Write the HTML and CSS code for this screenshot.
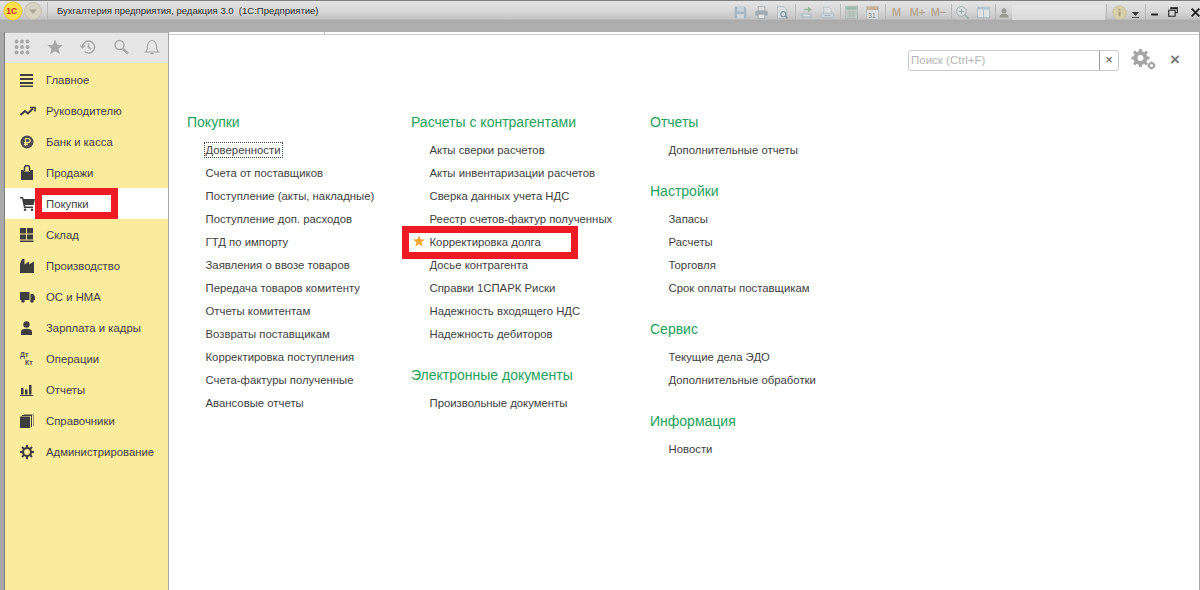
FILE: index.html
```html
<!DOCTYPE html>
<html lang="ru">
<head>
<meta charset="utf-8">
<title>Бухгалтерия предприятия</title>
<link rel="stylesheet" href="styles.css">
</head>
<body>
<div class="window">
  <header class="titlebar">
    <svg class="logo" width="20" height="20" viewBox="0 0 21 21"><circle cx="10.500" cy="10.500" r="9.500" fill="#f8e04a" stroke="#e9c23a"/><text x="3.500" y="14" class="logo-text">1С</text></svg>
    <svg class="menu-btn" width="20" height="20" viewBox="0 0 20 20"><circle cx="10" cy="10" r="8.500" fill="#d6d2c4" stroke="#c4c0b2"/><path d="M6 8.500h8L10 13z" fill="#a9a594"/></svg>
    <span class="sep sep-tall"></span>
    <span class="app-title">Бухгалтерия предприятия, редакция 3.0&nbsp; (1С:Предприятие)</span>
    <div class="tools">
      <span class="slot"><svg viewBox="0 0 18 18"><path d="M2 2h12l2 2v12H2z" fill="#9db4c6"/><rect x="5" y="2" width="8" height="6" fill="#c4d3de"/><rect x="5" y="11" width="8" height="5" fill="#d4dde3"/></svg></span>
      <span class="slot"><svg viewBox="0 0 18 18"><rect x="5" y="2" width="8" height="5" fill="#e2e2e2" stroke="#9aa3aa"/><rect x="1.500" y="7" width="15" height="6" rx="1" fill="#9aa5ad"/><rect x="5" y="11" width="8" height="5" fill="#e8e8e8" stroke="#9aa3aa"/></svg></span>
      <span class="slot"><svg viewBox="0 0 18 18"><path d="M3 2h8l3 3v11H3z" fill="#dbe2e6" stroke="#a5b4be"/><circle cx="10" cy="11" r="3" fill="none" stroke="#7a8e9c" stroke-width="1.500"/><path d="M12 13l3 3" stroke="#7a8e9c" stroke-width="2"/></svg></span>
      <span class="sep"></span>
      <span class="slot"><svg viewBox="0 0 20 18"><path d="M7 4h5V1l5 4-5 4V6H7z" fill="#8fb392"/><rect x="2" y="10" width="16" height="6" rx="2" fill="#b6c3cc"/><path d="M6 13h8" stroke="#eef1f3" stroke-width="1.500"/></svg></span>
      <span class="slot"><svg viewBox="0 0 20 18"><path d="M5 9V2h7l3 3v4" fill="#dde3e7" stroke="#a9b7c0"/><rect x="2" y="10" width="16" height="6" rx="2" fill="#ccd6dc" stroke="#a9b7c0"/><path d="M6 13h8" stroke="#8fa0ac"/></svg></span>
      <span class="sep"></span>
      <span class="slot"><svg viewBox="0 0 18 18"><rect x="2" y="1.500" width="14" height="15" fill="#c3cdc9" stroke="#9db0a8"/><rect x="3" y="2.500" width="12" height="3" fill="#8fb0a0"/><path d="M4 8h10M4 10.500h10M4 13h10M7 7v8M11 7v8" stroke="#a3b5ae"/></svg></span>
      <span class="slot"><svg viewBox="0 0 18 18"><rect x="2" y="2" width="14" height="15" fill="#dfe3e3" stroke="#b4b9b8"/><rect x="2" y="2" width="14" height="4" fill="#c5a88e"/><text x="4" y="15" class="cal-text">31</text></svg></span>
      <span class="sep"></span>
      <span class="slot mem">M</span>
      <span class="slot mem">M+</span>
      <span class="slot mem">M−</span>
      <span class="sep"></span>
      <span class="slot"><svg viewBox="0 0 20 20"><circle cx="8.500" cy="8.500" r="6.500" fill="#d8dcdc" stroke="#98a4a4" stroke-width="1.200"/><path d="M8.500 5.500v6M5.500 8.500h6" stroke="#8aa09a" stroke-width="1.200"/><path d="M13 13l5 5" stroke="#98a4a4" stroke-width="2"/></svg></span>
      <span class="slot"><svg viewBox="0 0 20 18"><rect x="2" y="2" width="16" height="14" fill="#e4e6e6" stroke="#9ab1c0"/><rect x="2" y="2" width="16" height="3" fill="#aebfca"/><path d="M10 5v11" stroke="#9ab1c0"/></svg></span>
      <span class="sep sep-tight"></span>
      <svg class="tool-user" width="10" height="11" viewBox="0 0 16 16"><circle cx="8" cy="5" r="4" fill="#9a9a94"/><path d="M1 16c0-5 3-6 7-6s7 1 7 6z" fill="#9a9a94"/></svg>
      <span class="user-field"></span>
      <span class="sep sep-tight"></span>
      <svg class="info" width="15" height="15" viewBox="0 0 20 20"><circle cx="10" cy="10" r="9" fill="#d7cfa9" stroke="#c7bf9a"/><rect x="8.800" y="9" width="2.400" height="6" fill="#a49c78"/><rect x="8.800" y="5" width="2.400" height="2.400" fill="#a49c78"/></svg>
      <svg class="caret" width="7" height="6" viewBox="0 0 7 6"><path d="M0 0h7L3.500 4z" fill="#333"/><path d="M0 5.500h7" stroke="#555"/></svg>
      <span class="sep sep-caret"></span>
      <svg class="win-btn win-min" width="7" height="3" viewBox="0 0 7 3"><path d="M0 1.500h7" stroke="#222" stroke-width="2"/></svg>
      <svg class="win-btn win-max" width="10" height="10" viewBox="0 0 14 14"><path d="M4 3V1h9v7h-3M1 4.500h9v8.500H1z" fill="none" stroke="#222" stroke-width="1.500"/><path d="M4 2h9" stroke="#222" stroke-width="2"/></svg>
      <svg class="win-btn win-close" width="9" height="9" viewBox="0 0 14 14"><path d="M1 1l12 12M13 1L1 13" stroke="#222" stroke-width="3"/></svg>
    </div>
  </header>

  <div class="body-row">
    <div class="frame"></div>
    <aside class="sidebar">
      <div class="quick">
        <svg width="16" height="16" viewBox="0 0 16 16" fill="#a8a8a8"><circle cx="2.500" cy="2.500" r="2"/><circle cx="8" cy="2.500" r="2"/><circle cx="13.500" cy="2.500" r="2"/><circle cx="2.500" cy="8" r="2"/><circle cx="8" cy="8" r="2"/><circle cx="13.500" cy="8" r="2"/><circle cx="2.500" cy="13.500" r="2"/><circle cx="8" cy="13.500" r="2"/><circle cx="13.500" cy="13.500" r="2"/></svg>
        <svg width="16" height="16" viewBox="0 0 16 16" fill="#a8a8a8"><path d="M8 .5l2.200 5.200 5.600.4-4.300 3.600 1.400 5.500L8 12.300l-4.900 2.900 1.400-5.500L.2 6.100l5.600-.4z"/></svg>
        <svg width="16" height="16" viewBox="0 0 16 16" fill="none" stroke="#a8a8a8" stroke-width="1.500"><path d="M2.500 8a6 6 0 1 1 2 4.500"/><path d="M8.500 4.500V8.500l2.500 1.500"/><path d="M0 6.500l2.500 2.500 2.500-2.500" stroke-width="1.200"/></svg>
        <svg width="16" height="16" viewBox="0 0 16 16" fill="none" stroke="#a8a8a8"><circle cx="6.500" cy="6" r="4.500" stroke-width="1.500"/><path d="M10 10l5 4.500" stroke-width="2.400"/></svg>
        <svg class="bell" width="16" height="16" viewBox="0 0 16 16" fill="none" stroke="#a8a8a8" stroke-width="1.200"><path d="M1.500 13c2-1.500 2-3 2-6 0-3 2-5.500 4.500-5.500s4.500 2.500 4.500 5.500c0 3 0 4.500 2 6z"/><path d="M6.500 14.500h3" stroke-width="1.600"/></svg>
      </div>
      <nav class="nav">
        <a class="nav-item"><span class="nav-icon"><svg width="14" height="14" viewBox="0 0 14 14" fill="#3d3d3d"><rect y="1" width="13" height="2"/><rect y="5" width="13" height="2"/><rect y="9" width="13" height="2"/><rect y="12.500" width="13" height="1.500"/></svg></span>Главное</a>
        <a class="nav-item"><span class="nav-icon"><svg width="16" height="14" viewBox="0 0 16 14" fill="none" stroke="#3d3d3d" stroke-width="2"><path d="M0.500 11l4.500-4 3 2.500 5-5"/><path d="M10 3.500h5v4" stroke-width="1.600"/></svg></span>Руководителю</a>
        <a class="nav-item"><span class="nav-icon"><svg width="14" height="14" viewBox="0 0 14 14"><circle cx="7" cy="7" r="6.500" fill="#4d4d4d"/><path d="M5.500 11V3.500h2.500a2 2 0 0 1 0 4.200H4M4 9.300h4" fill="none" stroke="#fbeb9d" stroke-width="1.200"/></svg></span>Банк и касса</a>
        <a class="nav-item"><span class="nav-icon"><svg width="14" height="15" viewBox="0 0 14 15"><path d="M1 5h2.500l.5 1.500h6L10.500 5H13v10H1z" fill="#3d3d3d"/><path d="M4.500 6V3a2.500 2.500 0 0 1 5 0v3" fill="none" stroke="#3d3d3d" stroke-width="1.500"/></svg></span>Продажи</a>
        <a class="nav-item nav-active"><span class="nav-icon"><svg width="15" height="14" viewBox="0 0 15 14" fill="#3d3d3d"><path d="M0 0h3l.6 2H15l-1.500 6H5l.3 1.500H13V11H4L2 1.500H0z"/><circle cx="5" cy="12.700" r="1.300"/><circle cx="12" cy="12.700" r="1.300"/></svg></span>Покупки</a>
        <a class="nav-item"><span class="nav-icon"><svg width="14" height="14" viewBox="0 0 14 14" fill="#3d3d3d"><rect width="6" height="5.500"/><rect x="7" width="6" height="5.500"/><rect y="6.500" width="6" height="5"/><rect x="7" y="6.500" width="6" height="5"/><rect y="12.500" width="13.500" height="1.500"/></svg></span>Склад</a>
        <a class="nav-item"><span class="nav-icon"><svg width="14" height="14" viewBox="0 0 14 14" fill="#3d3d3d"><path d="M0 14V5l2-5h2.500v5.500L9 2.500v3l5-3V14z"/></svg></span>Производство</a>
        <a class="nav-item"><span class="nav-icon"><svg width="15" height="12" viewBox="0 0 15 12" fill="#3d3d3d"><rect y="1" width="9.500" height="8"/><path d="M10.500 3H13l2 2.500V9h-4.500z"/><circle cx="3" cy="10" r="1.800"/><circle cx="12" cy="10" r="1.800"/></svg></span>ОС и НМА</a>
        <a class="nav-item"><span class="nav-icon"><svg width="13" height="14" viewBox="0 0 13 14" fill="#3d3d3d"><circle cx="6.500" cy="3.500" r="3.200"/><path d="M1 14v-3c0-2 2-3.200 5.500-3.200S12 9 12 11v3z"/></svg></span>Зарплата и кадры</a>
        <a class="nav-item"><span class="nav-icon dt"><span class="dt-d">Дт</span><span class="dt-k">Кт</span></span>Операции</a>
        <a class="nav-item"><span class="nav-icon"><svg width="13" height="12" viewBox="0 0 13 12" fill="#3d3d3d"><rect x="1" y="4" width="2.500" height="6.500"/><rect x="5" y="5.500" width="2.500" height="5"/><rect x="9" y="1" width="2.500" height="9.500"/><rect y="11" width="13" height="1"/></svg></span>Отчеты</a>
        <a class="nav-item"><span class="nav-icon"><svg width="14" height="14" viewBox="0 0 14 14" fill="#3d3d3d"><rect y="2.500" width="10" height="11.500"/><path d="M11 2H2V1h10v12h-1zM13 0H4v.5h9.500V12H13z"/></svg></span>Справочники</a>
        <a class="nav-item"><span class="nav-icon"><svg width="14" height="14" viewBox="0 0 14 14"><circle cx="7" cy="7" r="4" fill="none" stroke="#3d3d3d" stroke-width="2.200"/><path d="M7 0v3M7 11v3M0 7h3M11 7h3M2 2l2 2M10 10l2 2M12 2l-2 2M4 10l-2 2" stroke="#3d3d3d" stroke-width="2"/></svg></span>Администрирование</a>
      </nav>
    </aside>
    <main class="main">
      <div class="tabstrip"><span class="tab-line"></span></div>
      <div class="search-row">
        <div class="search">
          <span class="search-input">Поиск (Ctrl+F)</span>
          <span class="search-clear">×</span>
        </div>
        <svg class="gears" width="26" height="22" viewBox="0 0 26 22"><g fill="none" stroke="#a6a6a6"><circle cx="9.500" cy="9" r="5" stroke-width="4"/><path d="M9.500 0v4M9.500 14v4M.500 9h4M14.500 9h4M3 2.500l3 3M13 12.500l3 3M16 2.500l-3 3M6 12.500l-3 3" stroke-width="3"/><circle cx="20.500" cy="16.500" r="2.500" stroke-width="2"/><path d="M20.500 12.500v2M20.500 18.500v2M16.500 16.500h2M22.500 16.500h2" stroke-width="1.800"/></g></svg>
        <span class="close">×</span>
      </div>
      <div class="columns">
        <div class="col col-1">
          <section class="group">
            <h2 class="group-title">Покупки</h2>
            <a class="link link-focus"><span>Доверенности</span></a>
            <a class="link">Счета от поставщиков</a>
            <a class="link">Поступление (акты, накладные)</a>
            <a class="link">Поступление доп. расходов</a>
            <a class="link">ГТД по импорту</a>
            <a class="link">Заявления о ввозе товаров</a>
            <a class="link">Передача товаров комитенту</a>
            <a class="link">Отчеты комитентам</a>
            <a class="link">Возвраты поставщикам</a>
            <a class="link">Корректировка поступления</a>
            <a class="link">Счета-фактуры полученные</a>
            <a class="link">Авансовые отчеты</a>
          </section>
        </div>
        <div class="col col-2">
          <section class="group">
            <h2 class="group-title">Расчеты с контрагентами</h2>
            <a class="link">Акты сверки расчетов</a>
            <a class="link">Акты инвентаризации расчетов</a>
            <a class="link">Сверка данных учета НДС</a>
            <a class="link">Реестр счетов-фактур полученных</a>
            <a class="link link-star"><svg class="star" width="12" height="12" viewBox="0 0 16 16" fill="#f5a732"><path d="M8 .5l2.200 5.200 5.600.4-4.300 3.600 1.400 5.500L8 12.300l-4.900 2.900 1.400-5.500L.2 6.100l5.600-.4z"/></svg>Корректировка долга</a>
            <a class="link">Досье контрагента</a>
            <a class="link">Справки 1СПАРК Риски</a>
            <a class="link">Надежность входящего НДС</a>
            <a class="link">Надежность дебиторов</a>
          </section>
          <section class="group">
            <h2 class="group-title">Электронные документы</h2>
            <a class="link">Произвольные документы</a>
          </section>
        </div>
        <div class="col">
          <section class="group">
            <h2 class="group-title">Отчеты</h2>
            <a class="link">Дополнительные отчеты</a>
          </section>
          <section class="group">
            <h2 class="group-title">Настройки</h2>
            <a class="link">Запасы</a>
            <a class="link">Расчеты</a>
            <a class="link">Торговля</a>
            <a class="link">Срок оплаты поставщикам</a>
          </section>
          <section class="group">
            <h2 class="group-title">Сервис</h2>
            <a class="link">Текущие дела ЭДО</a>
            <a class="link">Дополнительные обработки</a>
          </section>
          <section class="group">
            <h2 class="group-title">Информация</h2>
            <a class="link">Новости</a>
          </section>
        </div>
      </div>
    </main>
    <div class="frame-right"></div>
  </div>
  <div class="mark mark-nav"></div>
  <div class="mark mark-link"></div>
</div>
</body>
</html>
```

FILE: styles.css
```css
* { box-sizing: border-box; }
html, body { margin: 0; height: 100%; overflow: hidden; }
body { font-family: "Liberation Sans", Arial, sans-serif; color: #3f3f3f; background: #fff; }
.window { position: relative; width: 1200px; height: 590px; display: flex; flex-direction: column; overflow: hidden; }

.titlebar {
  height: 32px; flex: none; display: flex; align-items: flex-start; padding-left: 3px;
  border-top: 1px solid #808080;
  background: linear-gradient(#e4e4e4 0, #d8d8d8 30%, #c4c4c4 58%, #acacac 62%, #b0b0b0 100%);
}
.logo { flex: none; }
.logo-text { font: bold 9px "Liberation Sans", sans-serif; fill: #d8281c; }
.menu-btn { flex: none; }
.sep { width: 1px; height: 16px; background: #b8b8b8; flex: none; margin-left: 2px; }
.sep-tall { height: 18px; margin: 1px 9px 0 4px; }
.sep-tight { margin-left: 1px; }
.app-title { font-size: 9.500px; line-height: 20px; color: #2e2e2e; white-space: nowrap; }
.tools { margin-left: auto; margin-top: 3px; display: flex; align-items: center; height: 16px; width: 470px; flex: none; }
.slot { width: 21px; height: 16px; flex: none; display: flex; align-items: center; justify-content: center; opacity: .85; }
.slot svg { width: 15px; height: 15px; }
.cal-text { font: 8px "Liberation Sans", sans-serif; fill: #6f7a7a; }
.mem { font: bold 11px/16px "Liberation Sans", sans-serif; color: #b9a998; opacity: 1; }
.tool-user { flex: none; margin-left: 3px; }
.user-field { width: 93px; height: 15px; background: linear-gradient(#e6e6e6, #dadada); flex: none; margin-left: 3px; }
.info { flex: none; margin-left: 5px; }
.caret { flex: none; margin: 6px 0 0 5px; }
.sep-caret { margin-left: 6px; }
.win-btn { flex: none; }
.win-min { margin: 4px 0 0 5px; }
.win-max { margin-left: 10px; }
.win-close { margin-left: 13px; }

.body-row { flex: 1; display: flex; min-height: 0; }
.frame { width: 5px; flex: none; background: #a9a9a9; border-right: 1px solid #7f7f7f; }
.frame-right { width: 1px; flex: none; background: #a9a9a9; }
.sidebar { width: 164px; flex: none; display: flex; flex-direction: column; border-right: 1px solid #a6a6a6; background: #fbeb9d; }
.quick { height: 31px; flex: none; display: flex; align-items: center; gap: 17px; padding: 0 0 2px 9px; background: #e6e6e6; border-top: 1px solid #b5b5b5; }
.quick svg { width: 16px; flex: none; }
.quick .bell { margin-left: -2px; }
.nav { display: flex; flex-direction: column; padding-top: 1px; }
.nav-item { height: 31px; display: flex; align-items: center; font-size: 11.350px; color: #3f3f3f; white-space: nowrap; }
.nav-active { background: #fff; }
.nav-icon { width: 41px; flex: none; display: flex; align-items: center; padding-left: 15px; }
.dt { display: block; font: bold 7px/8px "Liberation Sans", sans-serif; color: #4a4a4a; }
.dt-d, .dt-k { display: block; }
.dt-k { padding-left: 5px; }

.main { flex: 1; min-width: 0; display: flex; flex-direction: column; background: #fff; }
.tabstrip { height: 3px; flex: none; border-bottom: 1px solid #cfcfcf; padding-left: 155px; }
.tab-line { display: block; width: 1px; height: 2px; background: #bdbdbd; }
.search-row { height: 22px; margin-top: 14px; flex: none; display: flex; align-items: center; padding-left: 739px; }
.search { width: 211px; height: 21px; display: flex; border: 1px solid #c9c9c9; border-radius: 3px; font-size: 11.500px; }
.search-input { flex: 1; padding-left: 2px; line-height: 19px; color: #b5b5b5; border-right: 1px solid #9a9a9a; }
.search-clear { width: 18px; text-align: center; line-height: 18px; font-size: 13px; color: #555; }
.gears { margin-left: 12px; flex: none; }
.close { margin-left: 13px; font-size: 17px; line-height: 24px; color: #777; font-weight: bold; }

.columns { display: flex; padding: 37px 0 0 18px; }
.col { flex: none; }
.col-1 { width: 224px; }
.col-2 { width: 239px; }
.group { display: flex; flex-direction: column; padding-bottom: 16px; }
.group-title { margin: 0 0 2px; font-size: 14px; font-weight: normal; line-height: 28px; color: #1ea25a; white-space: nowrap; }
.link { display: flex; align-items: center; position: relative; height: 23px; padding-left: 18.500px; font-size: 11.350px; color: #3f3f3f; white-space: nowrap; }
.link-focus span { outline: 1px dotted #444; outline-offset: 1px; }
.star { position: absolute; left: 2px; top: 5px; }

.mark { position: absolute; border: 7px solid #ed1c24; pointer-events: none; }
.mark-nav { left: 35px; top: 188px; width: 83px; height: 31px; }
.mark-link { left: 402px; top: 226px; width: 176px; height: 33px; }
```
